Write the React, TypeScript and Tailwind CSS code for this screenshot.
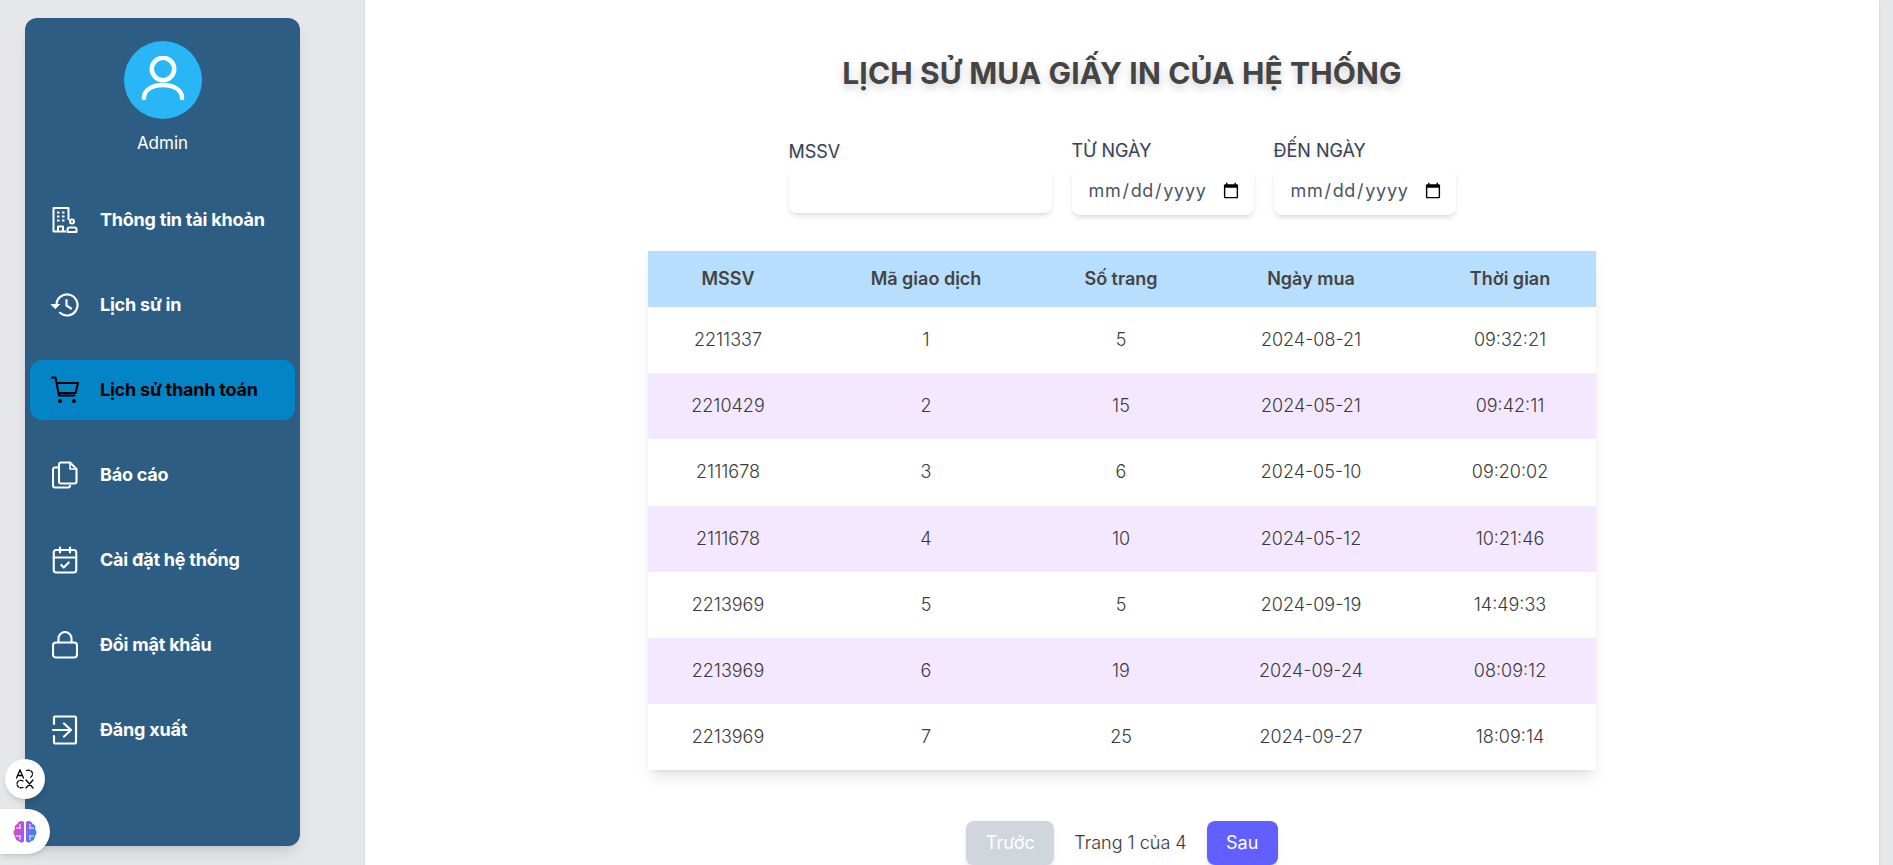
import { CalendarCheck } from 'lucide-react'
import React from 'react'

const rows = [
  ['2211337', '1', '5', '2024-08-21', '09:32:21'],
  ['2210429', '2', '15', '2024-05-21', '09:42:11'],
  ['2111678', '3', '6', '2024-05-10', '09:20:02'],
  ['2111678', '4', '10', '2024-05-12', '10:21:46'],
  ['2213969', '5', '5', '2024-09-19', '14:49:33'],
  ['2213969', '6', '19', '2024-09-24', '08:09:12'],
  ['2213969', '7', '25', '2024-09-27', '18:09:14'],
]

const BuildingIcon = () => (
  <svg viewBox="0 0 26 26" width="26" height="26" fill="none" stroke="currentColor" strokeWidth="2" strokeLinejoin="round">
    <path d="M14 24.500H1.500V1h15v12" />
    <path d="M5 5.500h2.500M10 5.500h2.500M5 9.500h2.500M10 9.500h2.500M5 13.500h2.500M10 13.500h2.500" strokeWidth="2" />
    <path d="M6 24.500v-5h5v5" />
    <circle cx="20" cy="14.500" r="2" />
    <path d="M15.500 25v-2.500a2 2 0 0 1 2-2h5a2 2 0 0 1 2 2V25z" />
  </svg>
)

const HistoryIcon = () => (
  <svg viewBox="0 0 30 24" width="30" height="24" fill="none" stroke="currentColor" strokeWidth="2.200" strokeLinecap="round" strokeLinejoin="round">
    <path d="M6.500 12A10.500 10.500 0 1 1 10 19.800" />
    <path d="M1.500 11.500h8l-4 4z" fill="currentColor" strokeWidth="1" />
    <path d="M16.500 7v5.500l4.500 3" />
  </svg>
)

const CartIcon = () => (
  <svg viewBox="0 0 28 28" width="28" height="28" fill="none" stroke="currentColor" strokeWidth="2.100" strokeLinecap="round" strokeLinejoin="round">
    <path d="M1 1.500h3.500l3.500 18h15.500" />
    <path d="M5.800 7H27l-2.500 10H8" />
    <circle cx="9" cy="25" r="2" fill="currentColor" stroke="none" />
    <circle cx="23" cy="25" r="2" fill="currentColor" stroke="none" />
  </svg>
)

const CopyIcon = () => (
  <svg viewBox="0 0 26 28" width="26" height="28" fill="none" stroke="currentColor" strokeWidth="2.100" strokeLinecap="round" strokeLinejoin="round">
    <path d="M7 3.500a2 2 0 0 1 2-2h9l6.500 6.500v12.500a2 2 0 0 1-2 2H9a2 2 0 0 1-2-2z" />
    <path d="M18 1.500V8h6.500" strokeWidth="1.600" />
    <path d="M7 6.500H3a2 2 0 0 0-2 2v16a2 2 0 0 0 2 2h13a2 2 0 0 0 2-2" />
  </svg>
)

const LockIcon = () => (
  <svg viewBox="0 0 26 28" width="26" height="28" fill="none" stroke="currentColor" strokeWidth="2.100" strokeLinecap="round" strokeLinejoin="round">
    <rect x="1" y="11.500" width="24" height="15" rx="3" />
    <path d="M6.500 11.500V7.500a6.500 6.500 0 0 1 13 0v4" />
  </svg>
)

const ExitIcon = () => (
  <svg viewBox="0 0 26 30" width="26" height="30" fill="none" stroke="currentColor" strokeWidth="2.200" strokeLinecap="round" strokeLinejoin="round">
    <path d="M2 9V2.500a1 1 0 0 1 1-1h20a1 1 0 0 1 1 1v25a1 1 0 0 1-1 1H3a1 1 0 0 1-1-1V21" />
    <path d="M1 15h16M12 8.500l7 6.500-7 6.500" />
  </svg>
)

const menu = [
  { label: 'Thông tin tài khoản', icon: <BuildingIcon /> },
  { label: 'Lịch sử in', icon: <HistoryIcon /> },
  { label: 'Lịch sử thanh toán', icon: <CartIcon />, active: true },
  { label: 'Báo cáo', icon: <CopyIcon /> },
  { label: 'Cài đặt hệ thống', icon: <CalendarCheck size={30} strokeWidth={1.700} /> },
  { label: 'Đổi mật khẩu', icon: <LockIcon /> },
  { label: 'Đăng xuất', icon: <ExitIcon /> },
]

const Sidebar = () => (
  <aside className="w-[275px] h-[828px] shrink-0 bg-[#2d5d82] rounded-xl shadow-lg px-[5px] pt-[23px]">
    <div className="flex flex-col items-center">
      <div className="w-[78px] h-[78px] rounded-full bg-[#29b6f6] flex items-center justify-center text-white">
        <svg viewBox="0 0 48 48" width="48" height="48" fill="none" stroke="currentColor" strokeWidth="4.500" strokeLinecap="round">
          <circle cx="24" cy="13" r="11.200" />
          <path d="M5 42c0-8 8-13 19-13s19 5 19 13" />
        </svg>
      </div>
      <p className="mt-[12px] text-white text-[17px] leading-6">Admin</p>
    </div>
    <nav className="mt-[35px] flex flex-col gap-[25px]">
      {menu.map((item) => (
        <div
          key={item.label}
          className={`h-[60px] flex items-center rounded-xl pl-[20px] font-bold text-lg tracking-[-0.22px] ${item.active ? 'bg-[#0284c7] text-black' : 'text-white'}`}
        >
          <span className="w-[30px] mr-[20px] flex justify-center">{item.icon}</span>
          <span>{item.label}</span>
        </div>
      ))}
    </nav>
  </aside>
)

const Filters = () => (
  <div className="flex justify-center items-start gap-5 mt-[44px]">
    <div>
      <label className="block text-lg leading-7 text-gray-700 mt-[3px] mb-[2px] [text-shadow:0_2px_4px_rgba(0,0,0,0.12)]">MSSV</label>
      <input type="text" className="block w-[263px] h-[45px] rounded-lg bg-white shadow-md px-4" />
    </div>
    <div>
      <label className="block text-lg leading-7 text-gray-700 mt-[2px] mb-[2px] [text-shadow:0_2px_4px_rgba(0,0,0,0.12)]">TỪ NGÀY</label>
      <input type="date" className="block w-[182px] h-[48px] rounded-lg bg-white shadow-md pl-4 pr-3 text-lg tracking-[0.7px] text-gray-600" />
    </div>
    <div>
      <label className="block text-lg leading-7 text-gray-700 mt-[2px] mb-[2px] [text-shadow:0_2px_4px_rgba(0,0,0,0.12)]">ĐẾN NGÀY</label>
      <input type="date" className="block w-[182px] h-[48px] rounded-lg bg-white shadow-md pl-4 pr-3 text-lg tracking-[0.7px] text-gray-600" />
    </div>
  </div>
)

const Table = () => (
  <table className="w-[948px] mx-auto mt-[36px] shadow-lg table-fixed border-collapse text-lg font-light text-[#3a3a3a]">
    <thead>
      <tr className="bg-[#b7dffd] h-[56px] text-[#444]">
        <th className="w-[160px] font-semibold">MSSV</th>
        <th className="w-[236px] font-semibold">Mã giao dịch</th>
        <th className="w-[154px] font-semibold">Số trang</th>
        <th className="w-[226px] font-semibold">Ngày mua</th>
        <th className="font-semibold">Thời gian</th>
      </tr>
    </thead>
    <tbody>
      {rows.map((row, index) => (
        <tr key={index} className={`h-[66.200px] text-center ${index % 2 === 1 ? 'bg-purple-100' : 'bg-white'}`}>
          {row.map((cell, i) => (
            <td key={i}>{cell}</td>
          ))}
        </tr>
      ))}
    </tbody>
  </table>
)

const Pagination = () => (
  <div className="flex justify-center items-center gap-5 mt-[51px] text-lg">
    <button className="w-[88px] h-[44px] rounded-lg bg-gray-300 text-white shadow-md">Trước</button>
    <span className="font-light text-[#3a3a3a] [text-shadow:0_2px_4px_rgba(0,0,0,0.12)]">Trang 1 của 4</span>
    <button className="w-[71px] h-[44px] rounded-lg bg-indigo-500 text-white shadow-md">Sau</button>
  </div>
)

export default function App() {
  return (
    <div className="relative h-[865px] overflow-hidden bg-[#e5e7eb] flex font-['Inter',sans-serif]">
      <div className="pl-[25px] pt-[18px]">
        <Sidebar />
      </div>
      <main className="ml-[65px] w-[1514px] h-[930px] bg-white shadow-sm pt-[55px]">
        <h1 className="text-center text-[30px] leading-9 font-bold tracking-[0.15px] text-[#444] [text-shadow:0_4px_8px_rgba(0,0,0,0.2)]">
          LỊCH SỬ MUA GIẤY IN CỦA HỆ THỐNG
        </h1>
        <Filters />
        <Table />
        <Pagination />
      </main>

      {/* floating widgets */}
      <div className="absolute left-[5px] top-[759px] w-[40px] h-[40px] rounded-full bg-white shadow-md flex items-center justify-center text-black">
        <svg viewBox="0 0 20 20" width="20" height="20" fill="none" stroke="currentColor" strokeWidth="1.300" strokeLinecap="round">
          <path d="M1.500 9 5 1l3.500 8M3 6.500h4" />
          <path d="M11.500 1.500c3-1 6 .5 6 3.500 0 1.500-1 3-2.500 3.500" strokeDasharray="3 1.500" />
          <path d="M8 12c-3-1.500-6 0-6 3s3 4.500 6 3.500" strokeDasharray="3 1.500" />
          <path d="m11 11 7 8M18 11l-7 8" />
        </svg>
      </div>
      <div className="absolute left-0 top-[809px] w-[50px] h-[45px] rounded-r-full bg-white shadow-md flex items-center justify-center">
        <svg viewBox="0 0 26 26" width="26" height="26">
          <defs>
            <linearGradient id="brain" x1="0" y1="0" x2="1" y2="0.300">
              <stop offset="0" stopColor="#ec4899" />
              <stop offset="0.500" stopColor="#a855f7" />
              <stop offset="1" stopColor="#3b82f6" />
            </linearGradient>
          </defs>
          <path
            fill="url(#brain)"
            d="M12 3c-2-2-6-1-6.500 2C3 5.500 2 8 3 10c-2 2-2 5 0 7 0 3 2 5 4 5 1 2 4 2 5 0zM14 3c2-2 6-1 6.500 2 2.500.5 3.500 3 2.500 5 2 2 2 5 0 7 0 3-2 5-4 5-1 2-4 2-5 0z"
          />
          <path d="M4 9h5M4 17h5M8 5v5M17 9h5M17 17h5M18 5v5M8 17v4M18 17v4" stroke="#fff" strokeWidth="0.900" fill="none" />
        </svg>
      </div>
    </div>
  )
}
